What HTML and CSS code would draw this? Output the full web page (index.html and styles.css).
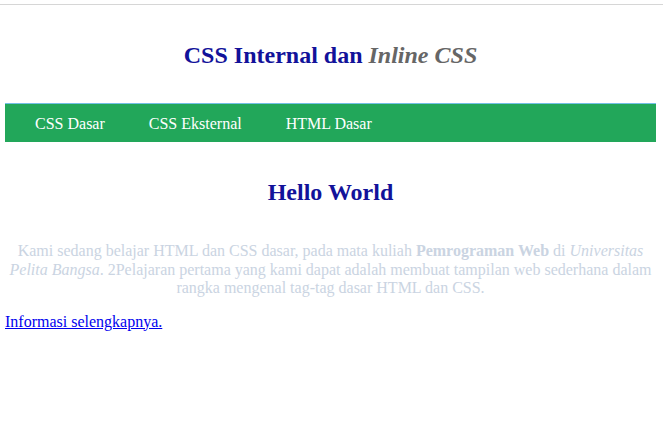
FILE: index.html
```html
<!DOCTYPE html>
<html lang="id">
<head>
<meta charset="utf-8">
<title>CSS Internal dan Inline CSS</title>
<link rel="stylesheet" href="styles.css">
</head>
<body>
<div class="topline"></div>
<div class="page">
  <h1 class="title">CSS Internal dan <em class="title-em">Inline CSS</em></h1>
  <nav class="menu">
    <a class="menu-link" href="#">CSS Dasar</a>
    <a class="menu-link" href="#">CSS Eksternal</a>
    <a class="menu-link" href="#">HTML Dasar</a>
  </nav>
  <h2 class="hello">Hello World</h2>
  <p class="intro">Kami sedang belajar HTML dan CSS dasar, pada mata kuliah <b>Pemrograman Web</b> di <i>Universitas Pelita Bangsa</i>. 2Pelajaran pertama yang kami dapat adalah membuat tampilan web sederhana dalam rangka mengenal tag-tag dasar HTML dan CSS.</p>
  <a class="more" href="#">Informasi selengkapnya.</a>
</div>
</body>
</html>
```
FILE: styles.css
```css
html, body {
  margin: 0;
  padding: 0;
  background: #ffffff;
}
body {
  font-family: "Liberation Serif", "Times New Roman", serif;
  font-size: 16px;
}
.topline {
  height: 1px;
  margin-top: 4px;
  background: #d6d6d6;
}
.page {
  padding: 0 7px 0 5px;
}
.title {
  margin: 36px 0 0;
  font-size: 24px;
  line-height: 28px;
  font-weight: bold;
  text-align: center;
  color: #12129a;
}
.title-em {
  color: #666666;
}
.menu {
  margin-top: 34px;
  border-top: 1px solid #74bfe6;
  background: #22a75a;
  height: 38px;
  display: flex;
  align-items: center;
  gap: 44px;
  padding-left: 30px;
  padding-top: 1px;
  box-sizing: border-box;
  height: 39px;
}
.menu-link {
  color: #ffffff;
  text-decoration: none;
  font-size: 16px;
}
.hello {
  margin: 36px 0 0;
  font-size: 24px;
  line-height: 28px;
  font-weight: bold;
  text-align: center;
  color: #12129a;
}
.intro {
  margin: 36px 0 0;
  text-align: center;
  line-height: 18.5px;
  color: #cad4e2;
}
.more {
  display: inline-block;
  margin-top: 15px;
  color: #0000ee;
  line-height: 18px;
}
```
